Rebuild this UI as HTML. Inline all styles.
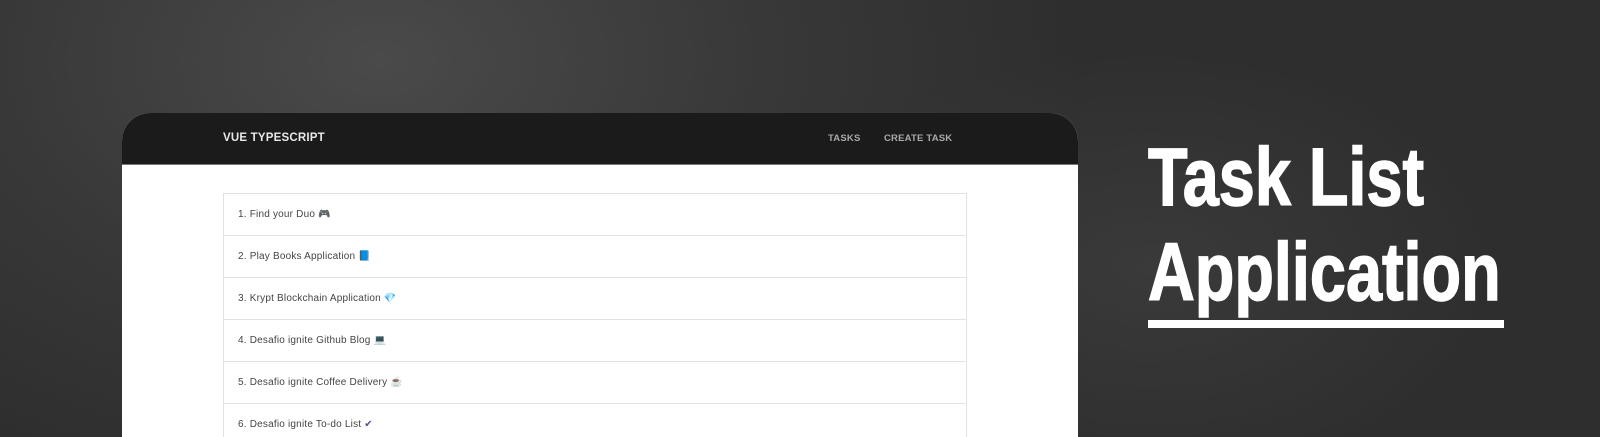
<!DOCTYPE html>
<html><head><meta charset="utf-8"><style>
html,body{margin:0;padding:0;width:1600px;height:437px;overflow:hidden}
body{position:relative;font-family:"Liberation Sans",sans-serif;
background:radial-gradient(ellipse 700px 450px at 380px 60px,#4a4a4a 0%,#383838 55%,#2e2e2e 100%),#2e2e2e;}
.glow{position:absolute;left:900px;top:37px;width:700px;height:400px;background:radial-gradient(ellipse 350px 220px at 250px 230px,rgba(80,80,80,.35),rgba(0,0,0,0));}
.frame{position:absolute;left:122px;top:113px;width:956px;height:324px;background:#fff;border-radius:28px 28px 0 0;overflow:hidden;}
.hdr{height:51px;background:#1b1b1b;border-bottom:1px solid #777;position:relative;}
.brand{position:absolute;left:101px;top:19px;color:#e8e8e8;font-weight:bold;font-size:11.5px;letter-spacing:.2px}
.nav{position:absolute;top:20px;color:#a9a9a9;font-size:9.5px;font-weight:bold;letter-spacing:.2px}
.list{position:absolute;left:101px;top:80px;width:742px;border:1px solid #e2e2e2;border-bottom:none}
.row{height:41px;border-bottom:1px solid #e2e2e2;font-size:10px;color:#444;line-height:41px;padding-left:14px;letter-spacing:.2px}
.t{position:absolute;left:1148px;color:#fff;font-weight:bold;font-size:82px;line-height:1;transform:scaleX(.79);transform-origin:0 0;white-space:nowrap;-webkit-text-stroke:1.5px #fff}
.ul{position:absolute;left:1148px;top:320px;width:356px;height:8px;background:#fff}
</style></head><body>
<div class="glow"></div>
<div class="frame">
 <div class="hdr"><div class="brand">VUE TYPESCRIPT</div><div class="nav" style="left:706px">TASKS</div><div class="nav" style="left:762px">CREATE TASK</div></div>
 <div class="list">
  <div class="row">1. Find your Duo <span style="color:#6a3f8f">🎮</span></div>
  <div class="row">2. Play Books Application <span style="color:#1e88e5">📘</span></div>
  <div class="row">3. Krypt Blockchain Application <span style="color:#29b6f6">💎</span></div>
  <div class="row">4. Desafio ignite Github Blog <span style="color:#4fc3f7">💻</span></div>
  <div class="row">5. Desafio ignite Coffee Delivery <span style="color:#6d4c41">☕</span></div>
  <div class="row">6. Desafio ignite To-do List <span style="color:#5c4b9b">✔</span></div>
 </div>
</div>
<div class="t" style="top:137px">Task List</div>
<div class="t" style="top:232px">Application</div>
<div class="ul"></div>
</body></html>
